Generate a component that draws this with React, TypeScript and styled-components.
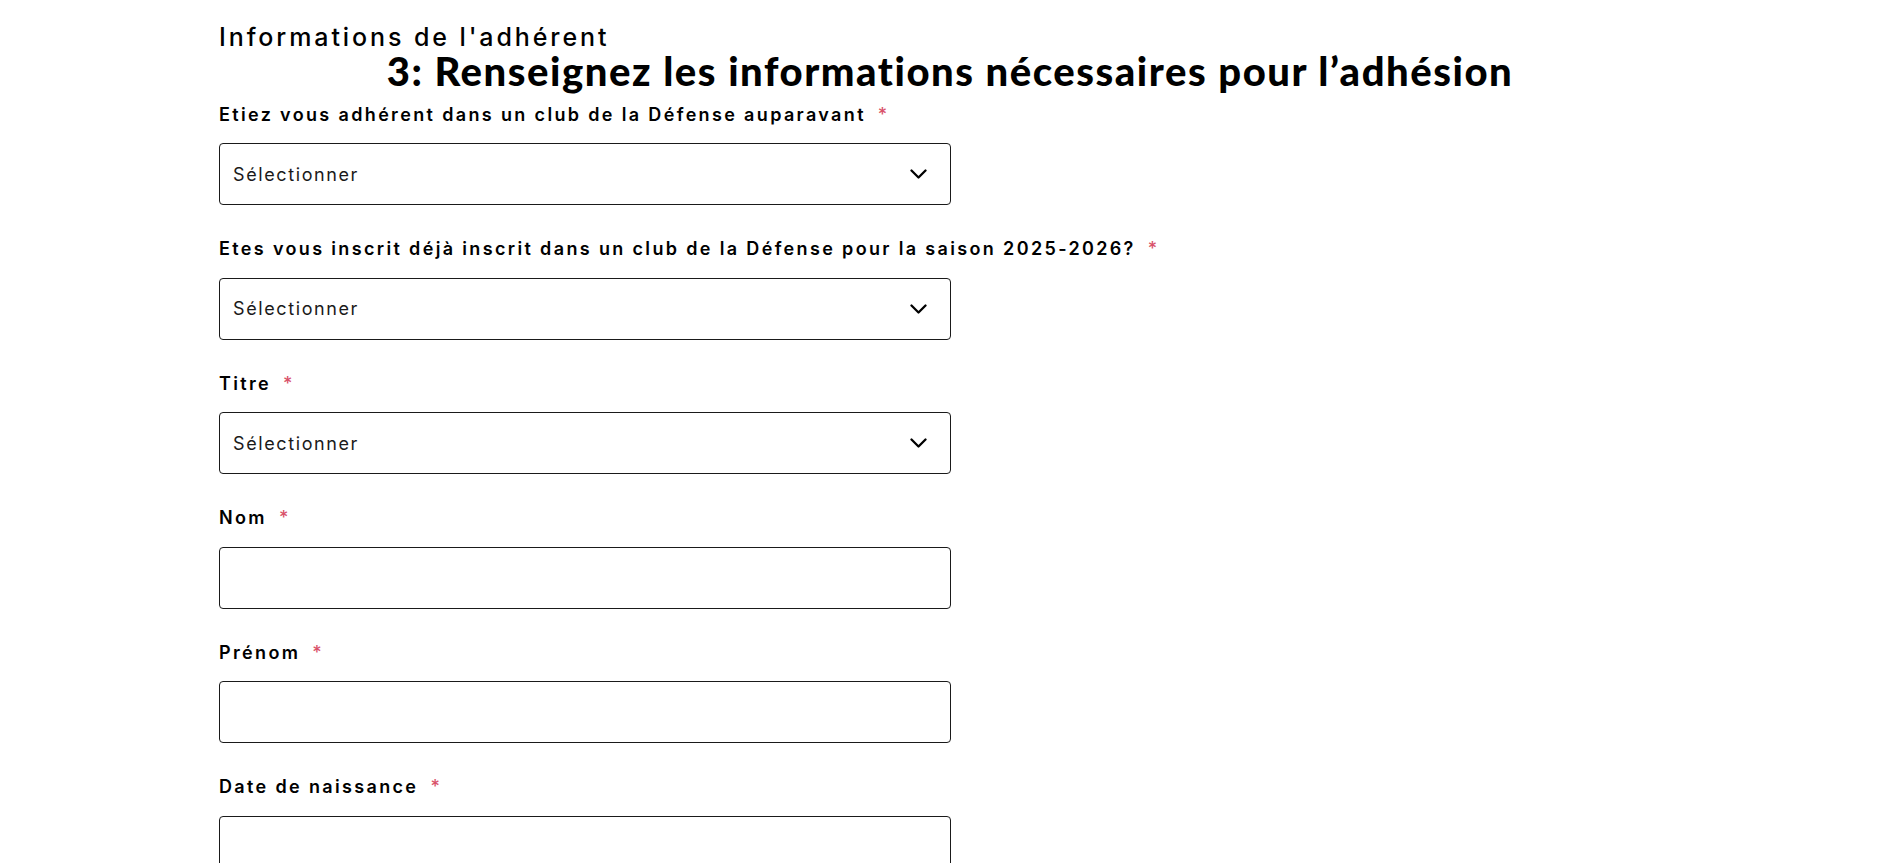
import React from "react";
import styled, { createGlobalStyle } from "styled-components";

const GlobalStyle = createGlobalStyle`
  html, body { margin: 0; padding: 0; background: #ffffff; }
  body { font-family: Inter, "Open Sans", sans-serif; color: #000; }
  * { box-sizing: border-box; }
`;

const Page = styled.div`
  width: 1462px;
  margin: 0 auto;
  padding-top: 22px;
`;

const SectionTitle = styled.h2`
  margin: 0;
  font-family: Inter, sans-serif;
  font-weight: 500;
  font-size: 25px;
  letter-spacing: 2.9px;
  line-height: 30px;
  color: #000;
`;

const StepHeading = styled.h1`
  margin: -4px 0 0;
  text-align: center;
  font-family: Lato, sans-serif;
  font-weight: 900;
  font-size: 40px;
  letter-spacing: 1.55px;
  line-height: 46px;
  color: #000;
`;

const Form = styled.div`
  display: flex;
  flex-direction: column;
  padding-top: 8px;
`;

const Field = styled.div`
  display: flex;
  flex-direction: column;
  align-items: flex-start;
  margin-bottom: 31.5px;
`;

const Label = styled.label`
  display: flex;
  align-items: center;
  height: 24px;
  margin-bottom: 17px;
  white-space: nowrap;
  font-family: Inter, sans-serif;
  font-weight: 600;
  font-size: 18px;
  letter-spacing: 2.35px;
  color: #000;
`;

const Required = styled.span`
  color: #d9526a;
  margin-left: 12px;
  font-weight: 500;
  letter-spacing: 0;
`;

const Box = styled.div`
  display: flex;
  align-items: center;
  justify-content: space-between;
  width: 732px;
  height: 62px;
  padding: 0 23px 0 13px;
  border: 1px solid #1a1a1a;
  border-radius: 4px;
  background: #fff;
  font-family: Inter, sans-serif;
  font-size: 18px;
  letter-spacing: 1.6px;
  color: #1a1a1a;
`;

const Chevron = () => (
  <svg width="17" height="10" viewBox="0 0 17 10" fill="none">
    <path d="M1.5 1.5l7 7 7-7" stroke="#000" strokeWidth="2.3" strokeLinecap="round" strokeLinejoin="round" />
  </svg>
);

type FieldDef = { label: string; select?: boolean };

const fields: FieldDef[] = [
  { label: "Etiez vous adhérent dans un club de la Défense auparavant", select: true },
  { label: "Etes vous inscrit déjà inscrit dans un club de la Défense pour la saison 2025-2026?", select: true },
  { label: "Titre", select: true },
  { label: "Nom" },
  { label: "Prénom" },
  { label: "Date de naissance" },
];

export default function App() {
  return (
    <>
      <GlobalStyle />
      <Page>
        <SectionTitle>Informations de l'adhérent</SectionTitle>
        <StepHeading>3: Renseignez les informations nécessaires pour l’adhésion</StepHeading>
        <Form>
          {fields.map((f) => (
            <Field key={f.label}>
              <Label>
                {f.label}
                <Required>*</Required>
              </Label>
              <Box>
                {f.select ? (
                  <>
                    <span>Sélectionner</span>
                    <Chevron />
                  </>
                ) : null}
              </Box>
            </Field>
          ))}
        </Form>
      </Page>
    </>
  );
}
